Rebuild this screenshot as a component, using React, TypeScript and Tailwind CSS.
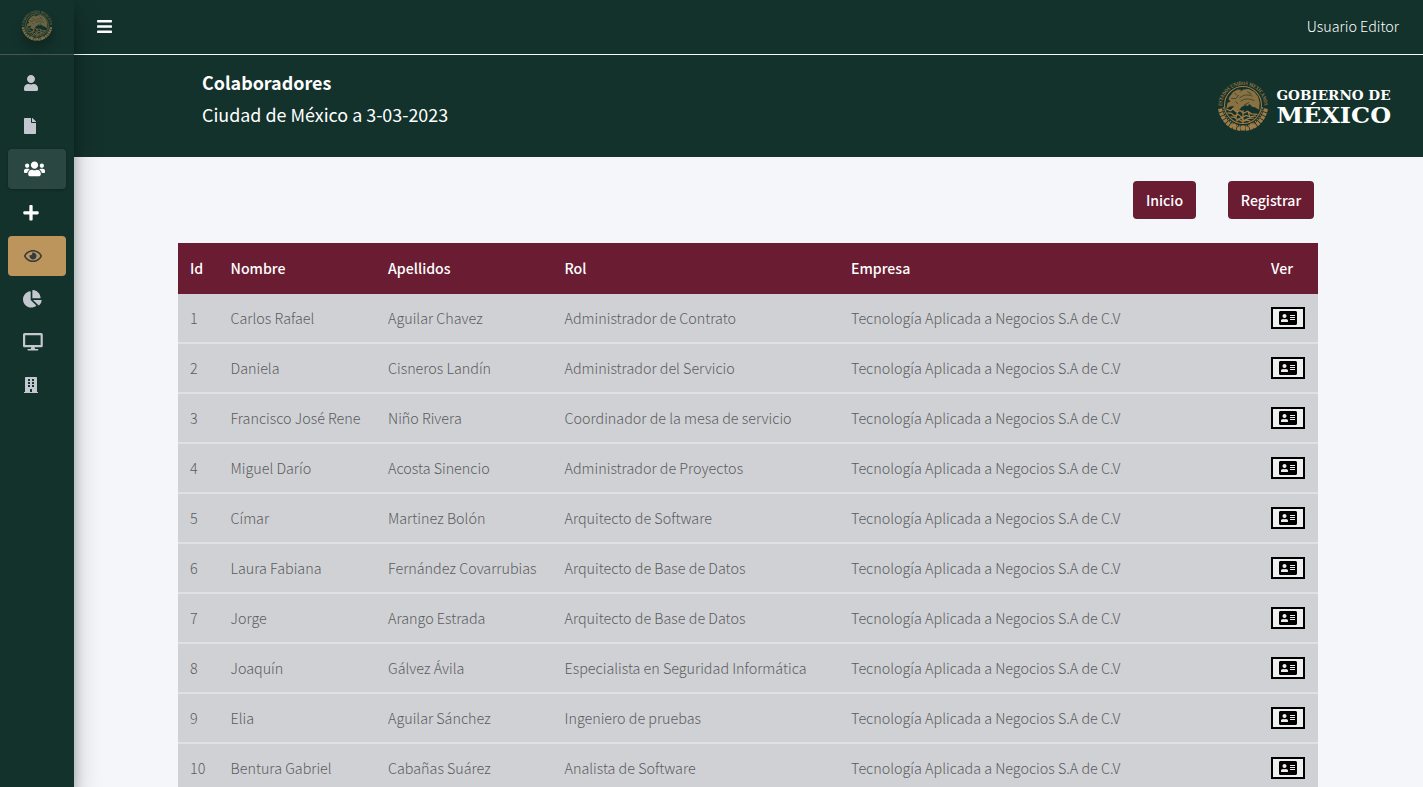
import React from "react";
import {
  FaUser,
  FaFile,
  FaUsers,
  FaPlus,
  FaRegEye,
  FaChartPie,
  FaDesktop,
  FaBuilding,
  FaBars,
  FaAddressCard,
} from "react-icons/fa";

const EMPRESA = "Tecnología Aplicada a Negocios S.A de C.V";

const rows = [
  ["Carlos Rafael", "Aguilar Chavez", "Administrador de Contrato"],
  ["Daniela", "Cisneros Landín", "Administrador del Servicio"],
  ["Francisco José Rene", "Niño Rivera", "Coordinador de la mesa de servicio"],
  ["Miguel Darío", "Acosta Sinencio", "Administrador de Proyectos"],
  ["Címar", "Martinez Bolón", "Arquitecto de Software"],
  ["Laura Fabiana", "Fernández Covarrubias", "Arquitecto de Base de Datos"],
  ["Jorge", "Arango Estrada", "Arquitecto de Base de Datos"],
  ["Joaquín", "Gálvez Ávila", "Especialista en Seguridad Informática"],
  ["Elia", "Aguilar Sánchez", "Ingeniero de pruebas"],
  ["Bentura Gabriel", "Cabañas Suárez", "Analista de Software"],
];

const headers = ["Id", "Nombre", "Apellidos", "Rol", "Empresa", "Ver"];

const GRID = "grid grid-cols-[40.5px_157.5px_176.5px_286.5px_420px_59px]";

function Seal({ className, id }: { className: string; id: string }) {
  return (
    <svg viewBox="0 0 100 100" className={className} fill="none" stroke="currentColor">
      <path id={id} d="M9.500 52A40.500 40.500 0 0 1 90.500 52" stroke="none" />
      <text fill="currentColor" stroke="none" fontSize="10.500" fontWeight="700" fontFamily="Liberation Serif, serif">
        <textPath href={`#${id}`} textLength="126" lengthAdjust="spacingAndGlyphs">ESTADOS UNIDOS MEXICANOS</textPath>
      </text>
      <path d="M6 57C10 80 27 95 47 96M94 57C90 80 73 95 53 96" strokeWidth="8" strokeDasharray="6 1.500" />
      <path d="M12 54C15 77 30 89 48 91M88 54C85 77 70 89 52 91" strokeWidth="2" strokeDasharray="3 2" />
      <circle cx="50" cy="50" r="35.500" strokeWidth="2" />
      <path d="M24 34l7-9 9-5 7 1-4 5 8-6 10-1 11 6 7 9 3 11-1 14-9-5-8 1-9-5-8 4-5 7-8 1-5-5 4-5-8 1-7 4 2-11 6-3-4-4z" fill="currentColor" stroke="none" opacity=".85" />
      <path d="M27 37l9 1 6-7M34 27l5 5M43 37c8-7 17-8 25-4M45 43c9-6 17-6 27-1M52 50l10-5M36 43l4 5M58 24l8 5" stroke="#13322b" strokeWidth="1.200" />
      <path d="M62 48l17 15-3 4-19-11z" fill="#13322b" stroke="none" />
      <path d="M18 58l8 3 5-4 6 6 8-2 6 5 8-4 7 5 12 1M20 65l8 1 5 5 8-3 7 6 8-4 7 3 12-2M26 73l8 1 5 4 7-3 6 5 7-4 12-1M37 81l5-3 7 4 9-3 6 2M50 60v25M40 62l-4 14M60 63l4 13" strokeWidth="2.400" />
      <circle cx="50" cy="94" r="5" fill="currentColor" stroke="none" />
      <circle cx="67" cy="90" r="5" fill="currentColor" stroke="none" />
      <circle cx="33" cy="90" r="4.500" fill="currentColor" stroke="none" />
    </svg>
  );
}

const item = "flex h-10 w-[58px] items-center rounded pl-[15px]";

function Sidebar() {
  return (
    <aside className="z-10 w-[74px] shrink-0 bg-[#13322b] text-[17.6px] text-[#c2c7d0] shadow-[0_14px_28px_rgba(0,0,0,0.25),0_10px_10px_rgba(0,0,0,0.22)]">
      <div className="flex h-[55px] justify-center border-b border-[#4b545c] pt-[9px]">
        <Seal id="ring-small" className="h-8 w-8 rounded-full text-[#7b6c46] shadow-[0_8px_10px_rgba(0,0,0,0.22)]" />
      </div>
      <nav className="flex flex-col gap-[3.2px] px-2 pt-2">
        <div className={item}><FaUser className="h-4 w-4" /></div>
        <div className={item}><FaFile className="h-4 w-[14px]" /></div>
        <div className={`${item} bg-[#2b4741] text-white shadow-[0_1px_3px_rgba(0,0,0,0.25)]`}><FaUsers className="mb-px ml-[0.5px] h-[17.6px] w-[21px]" /></div>
        <div className={`${item} text-white`}><FaPlus className="h-[17.6px] w-4" /></div>
        <div className={`${item} bg-[#bc955c] text-[#343a40]`}><FaRegEye className="ml-[1px] h-4 w-[18px]" /></div>
        <div className={item}><FaChartPie className="h-[17.6px] w-[18.7px]" /></div>
        <div className={item}><FaDesktop className="h-[17.6px] w-[19.8px]" /></div>
        <div className={item}><FaBuilding className="mb-px h-4 w-4" /></div>
      </nav>
    </aside>
  );
}

function GobLogo() {
  return (
    <div className="mb-[3px] flex items-center">
      <Seal id="ring-large" className="h-[52px] w-[52px] text-[#a07c46]" />
      <svg width="120" height="56" viewBox="0 -3 120 56" className="-mr-1 ml-[7px]" fill="#fff" fontFamily="DejaVu Serif, serif" fontWeight="700">
        <text x="0.5" y="20" fontSize="13.6" textLength="114" lengthAdjust="spacingAndGlyphs">GOBIERNO DE</text>
        <text x="0.5" y="43" fontSize="21.5" textLength="114.5" lengthAdjust="spacingAndGlyphs">MÉXICO</text>
      </svg>
    </div>
  );
}

export default function App() {
  return (
    <div className="flex h-[787px] w-full overflow-hidden bg-[#f4f6f9] font-['Noto_Sans_CJK_JP','Noto_Sans_CJK_SC',sans-serif] text-[14.33px]">
      <Sidebar />
      <div className="flex min-w-0 flex-1 flex-col">
        <header className="flex h-[55px] shrink-0 items-center justify-between border-b border-white bg-[#13322b] pr-6 pl-[23px] text-white">
          <FaBars className="mb-[2px] h-[17px] w-[15px]" />
          <span className="mb-[2px] font-light">Usuario Editor</span>
        </header>
        <section className="flex h-[102px] shrink-0 items-center justify-between bg-[#13322b] pr-[31px] pl-32 text-white">
          <div className="mb-4 text-[17.9px] leading-8">
            <h1 className="font-bold">Colaboradores</h1>
            <p>Ciudad de México a 3-03-2023</p>
          </div>
          <GobLogo />
        </section>
        <div className="flex justify-end gap-8 pt-6 pr-[109px] text-[14.1px] font-medium text-white">
          <button className="h-[38px] w-[63px] rounded bg-[#691c32] pt-[2px]">Inicio</button>
          <button className="h-[38px] w-[86px] rounded bg-[#691c32] pt-[2px]">Registrar</button>
        </div>
        <main className="mt-6 ml-[104px] w-[1140px]">
          <div className={`${GRID} h-[51px] items-center bg-[#691c32] text-[14.15px] font-medium text-white`}>
            {headers.map((h) => (
              <div key={h} className="px-3">{h}</div>
            ))}
          </div>
          {rows.map((r, i) => (
            <div key={i} className={`${GRID} h-[50px] items-center border-b-2 border-[#dee2e6] bg-[#d0d1d4] font-light whitespace-nowrap text-[#5a5c60]`}>
              <div className="px-3">{i + 1}</div>
              {r.map((c, j) => (
                <div key={j} className="px-3">{c}</div>
              ))}
              <div className="px-3">{EMPRESA}</div>
              <div className="px-3">
                <button className="flex h-[22px] w-[34px] items-center justify-center border-2 border-black bg-[#efefef] text-black">
                  <FaAddressCard className="h-4 w-[18px]" />
                </button>
              </div>
            </div>
          ))}
        </main>
      </div>
    </div>
  );
}
